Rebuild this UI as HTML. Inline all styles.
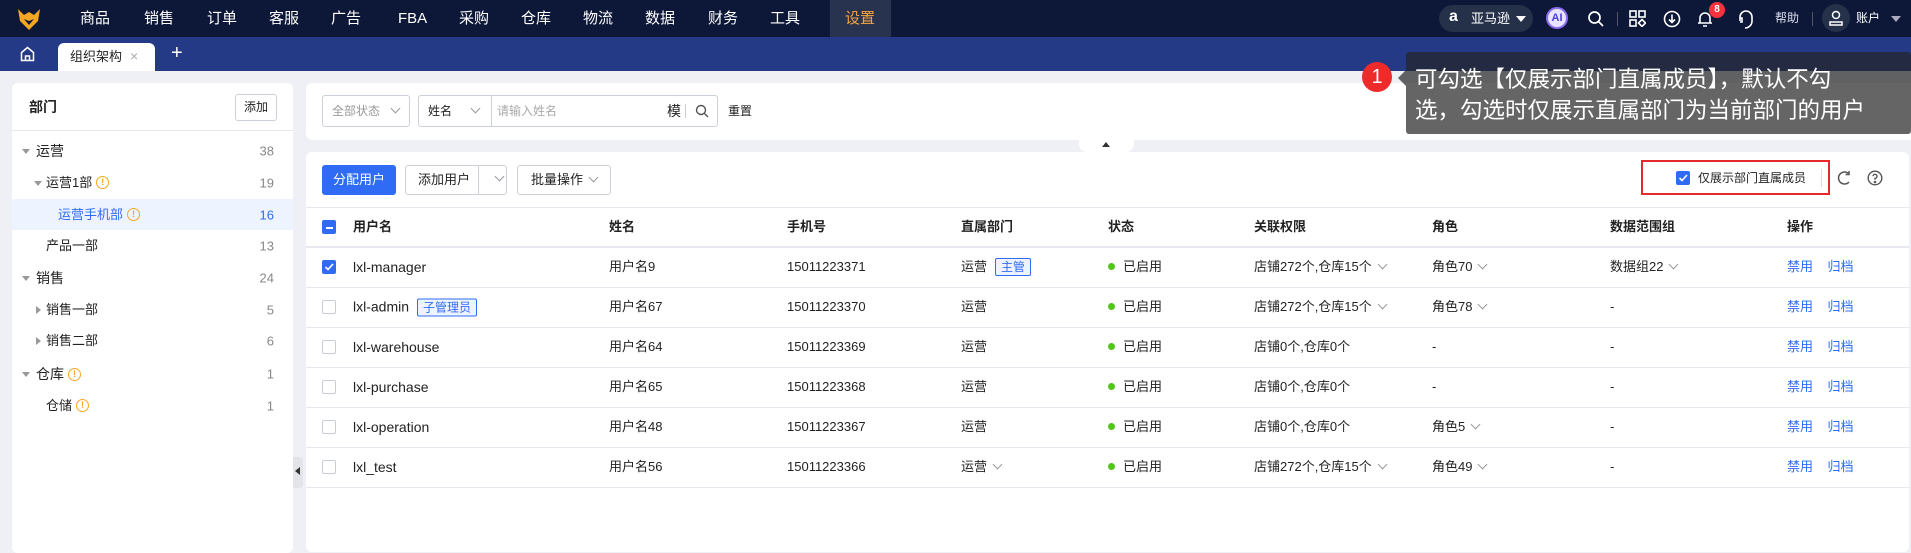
<!DOCTYPE html>
<html><head><meta charset="utf-8">
<style>
*{margin:0;padding:0;box-sizing:border-box}
body{width:1911px;height:546px;overflow:hidden;background:#eef0f6;font-family:"Liberation Sans","Noto Sans CJK SC",sans-serif;font-size:13px;color:#222;position:relative}
.a{position:absolute}
.nav{left:0;top:0;width:1911px;height:37px;background:#0d1838}
.nav .m{position:absolute;top:0;height:37px;line-height:37px;color:#fff;font-size:15px}
.tabs{left:0;top:37px;width:1911px;height:34px;background:#243a86}
.panel{background:#fff;border-radius:6px}
.t{position:absolute;white-space:nowrap;transform:translateY(-50%);line-height:18px}
.cnt{position:absolute;right:19px;color:#888;transform:translateY(-50%)}
.warn{display:inline-block;width:13px;height:13px;border:1.3px solid #f5a623;border-radius:50%;color:#f5a623;font-size:9px;line-height:11px;text-align:center;font-weight:bold;vertical-align:middle;margin-left:4px;margin-top:-2px}
.btn{position:absolute;border:1px solid #ccd0d8;border-radius:3px;background:#fff;height:30px;line-height:28px;font-size:13px;text-align:center}
.cb{position:absolute;width:14px;height:14px;border:1px solid #c8ccd4;border-radius:2px;background:#fff}
.cbon{background:#2f6bf5;border-color:#2f6bf5}
.hl{position:absolute;left:0;width:100%;height:1px;background:#e6e8ee}
.dot{display:inline-block;width:7px;height:7px;border-radius:50%;background:#52c41a;margin-right:8px;vertical-align:1px}
.ln{color:#2f6bf5}
.chev{display:inline-block;width:7px;height:7px;border-right:1px solid #999;border-bottom:1px solid #999;transform:rotate(45deg);margin-left:7px;vertical-align:3px}
.tag{display:inline-block;border:1px solid #2f6bf5;color:#2f6bf5;background:#eef4ff;font-size:12px;line-height:16px;padding:0 5px;border-radius:2px;margin-left:8px}
.dn{position:absolute;border:4px solid transparent;border-top:5px solid #999;border-bottom:0}
.rt{position:absolute;border:4px solid transparent;border-left:5px solid #999;border-right:0}
</style></head><body>

<div class="a nav">
 <svg class="a" style="left:17px;top:7px" width="24" height="24" viewBox="0 0 24 24"><path d="M1 2 L7 8 L12 5 L17 8 L23 2 L21 14 L12 23 L3 14Z" fill="#f5a623"/><path d="M7 12 L12 18 L17 12 L12 14Z" fill="#0d1838"/></svg>
 <div class="m" style="left:80px">商品</div><div class="m" style="left:144px">销售</div><div class="m" style="left:207px">订单</div><div class="m" style="left:269px">客服</div><div class="m" style="left:331px">广告</div><div class="m" style="left:398px">FBA</div><div class="m" style="left:459px">采购</div><div class="m" style="left:521px">仓库</div><div class="m" style="left:583px">物流</div><div class="m" style="left:645px">数据</div><div class="m" style="left:708px">财务</div><div class="m" style="left:770px">工具</div>
 <div class="a" style="left:830px;top:0;width:61px;height:37px;background:#283350"></div>
 <div class="m" style="left:845px;color:#f7a33b">设置</div>
 <div class="a" style="left:1439px;top:5px;width:94px;height:27px;border-radius:14px;background:#253049"></div>
 <div class="a" style="left:1449px;top:5px;color:#fff;font-weight:bold;font-size:16px;line-height:24px">a</div>
 <div class="a" style="left:1471px;top:5px;color:#fff;font-size:13px;line-height:27px">亚马逊</div>
 <div class="a" style="left:1516px;top:16px;border:5px solid transparent;border-top:6px solid #fff"></div>
 <div class="a" style="left:1546px;top:7px;width:22px;height:22px;border-radius:50%;background:#e8e4ff;border:2px solid #8a6cf0;color:#4a3dd8;font-size:11px;font-weight:bold;text-align:center;line-height:18px">AI</div>
 <svg class="a" style="left:1587px;top:10px" width="18" height="18" viewBox="0 0 18 18" fill="none" stroke="#fff" stroke-width="1.7"><circle cx="7.5" cy="7.5" r="5.5"/><path d="M11.5 11.5 L16 16"/></svg>
 <div class="a" style="left:1617px;top:12px;width:1px;height:14px;background:#556"></div>
 <svg class="a" style="left:1629px;top:10px" width="17" height="17" viewBox="0 0 17 17" fill="none" stroke="#fff" stroke-width="1.6"><rect x="1" y="1" width="6" height="6"/><rect x="10" y="1" width="6" height="6"/><rect x="1" y="10" width="6" height="6"/><path d="M13 9.5 L16.5 13 L13 16.5 L9.5 13Z"/></svg>
 <svg class="a" style="left:1663px;top:10px" width="18" height="18" viewBox="0 0 18 18" fill="none" stroke="#fff" stroke-width="1.6"><circle cx="9" cy="9" r="7.5"/><path d="M9 4.5 V12 M6 9.5 L9 12.5 L12 9.5"/></svg>
 <svg class="a" style="left:1696px;top:10px" width="18" height="18" viewBox="0 0 18 18" fill="none" stroke="#fff" stroke-width="1.6"><path d="M4 13 V8 A5 5 0 0 1 14 8 V13 Z M2 13 H16 M7 16 H11"/></svg>
 <div class="a" style="left:1709px;top:2px;width:16px;height:16px;border-radius:50%;background:#f5333f;color:#fff;font-size:10px;font-weight:bold;text-align:center;line-height:16px">8</div>
 <svg class="a" style="left:1737px;top:9px" width="18" height="20" viewBox="0 0 18 20" fill="none" stroke="#fff" stroke-width="1.6"><path d="M3 12 V8 A6 6 0 0 1 15 8 V12 M8 19 A7 7 0 0 0 15 12 M3 9 H5 V13 H3"/></svg>
 <div class="a" style="left:1775px;top:0;color:#dde;font-size:12px;line-height:37px">帮助</div>
 <div class="a" style="left:1812px;top:12px;width:1px;height:14px;background:#556"></div>
 <div class="a" style="left:1822px;top:4px;width:28px;height:28px;border-radius:50%;background:#253049"></div>
 <svg class="a" style="left:1828px;top:10px" width="16" height="16" viewBox="0 0 16 16" fill="none" stroke="#fff" stroke-width="1.5"><circle cx="8" cy="5" r="3.5"/><path d="M2 15 V12 H14 V15Z"/></svg>
 <div class="a" style="left:1856px;top:0;color:#fff;font-size:12px;line-height:37px">账户</div>
 <div class="a" style="left:1891px;top:16px;border:5px solid transparent;border-top:6px solid #aab"></div>
</div>

<div class="a tabs">
 <svg class="a" style="left:20px;top:9px" width="15" height="16" viewBox="0 0 15 16" fill="none" stroke="#fff" stroke-width="1.5"><path d="M1.5 6.5 L7.5 1.5 L13.5 6.5 V14.5 H1.5Z M5.5 14.5 V10 H9.5 V14.5"/></svg>
 <div class="a" style="left:58px;top:6px;width:97px;height:28px;background:#fff;border-radius:6px 6px 0 0"></div>
 <div class="a" style="left:70px;top:6px;font-size:13px;color:#222;line-height:28px">组织架构</div>
 <div class="a" style="left:130px;top:6px;font-size:14px;color:#aaa;line-height:26px">×</div>
 <div class="a" style="left:171px;top:5px;font-size:20px;color:#fff">+</div>
</div>

<!-- left panel -->
<div class="a panel" style="left:12px;top:83px;width:281px;height:470px">
 <div class="t" style="left:17px;top:24px;font-size:14px;font-weight:bold">部门</div>
 <div class="btn" style="left:223px;top:11px;width:42px;height:27px;line-height:25px;font-size:12px">添加</div>
 <div class="hl" style="top:47px"></div>
 <div class="a" style="left:0;top:116px;width:281px;height:31px;background:#eef4ff"></div>
 <div class="dn" style="left:10px;top:66px"></div><div class="t" style="left:24px;top:68px;font-size:14px">运营</div><div class="cnt" style="top:68px">38</div>
 <div class="dn" style="left:22px;top:98px"></div><div class="t" style="left:34px;top:100px">运营1部<span class="warn">!</span></div><div class="cnt" style="top:100px">19</div>
 <div class="t" style="left:46px;top:132px;color:#2f6bf5">运营手机部<span class="warn">!</span></div><div class="cnt" style="top:132px;color:#2f6bf5">16</div>
 <div class="t" style="left:34px;top:163px">产品一部</div><div class="cnt" style="top:163px">13</div>
 <div class="dn" style="left:10px;top:193px"></div><div class="t" style="left:24px;top:195px;font-size:14px">销售</div><div class="cnt" style="top:195px">24</div>
 <div class="rt" style="left:24px;top:223px"></div><div class="t" style="left:34px;top:227px">销售一部</div><div class="cnt" style="top:227px">5</div>
 <div class="rt" style="left:24px;top:254px"></div><div class="t" style="left:34px;top:258px">销售二部</div><div class="cnt" style="top:258px">6</div>
 <div class="dn" style="left:10px;top:289px"></div><div class="t" style="left:24px;top:291px;font-size:14px">仓库<span class="warn">!</span></div><div class="cnt" style="top:291px">1</div>
 <div class="t" style="left:34px;top:323px">仓储<span class="warn">!</span></div><div class="cnt" style="top:323px">1</div>
</div>
<div class="a" style="left:293px;top:457px;width:10px;height:31px;background:#e2e4ea;border-radius:0 4px 4px 0"></div>
<div class="a" style="left:295px;top:467px;border:4px solid transparent;border-right:5px solid #333;border-left:0"></div>

<!-- search panel -->
<div class="a panel" style="left:306px;top:83px;width:1605px;height:57px;border-radius:6px 0 0 6px">
 <div class="btn" style="left:16px;top:12px;width:88px;height:32px;line-height:30px;text-align:left;padding-left:9px;color:#999;font-size:12px">全部状态<span class="chev" style="margin-left:12px"></span></div>
 <div class="btn" style="left:112px;top:12px;width:300px;height:32px;line-height:30px;text-align:left;padding-left:9px;font-size:12px">姓名<span class="chev" style="margin-left:20px"></span><span style="color:#aaa;margin-left:18px">请输入姓名</span>
  <span class="a" style="left:72px;top:0;width:1px;height:30px;background:#ccd0d8"></span>
  <span class="a" style="left:248px;top:0;font-size:14px">模</span><span class="a" style="left:266px;top:8px;width:1px;height:14px;background:#ccc"></span>
  <svg class="a" style="left:276px;top:8px" width="14" height="14" viewBox="0 0 14 14" fill="none" stroke="#555" stroke-width="1.4"><circle cx="6" cy="6" r="4.5"/><path d="M9.5 9.5 L13 13"/></svg></div>
 <div class="t" style="left:422px;top:28px;font-size:12px">重置</div>
</div>
<div class="a" style="left:1079px;top:140px;width:55px;height:12px;background:#fff;border-radius:0 0 8px 8px"></div>
<div class="a" style="left:1102px;top:142px;border:4px solid transparent;border-bottom:5px solid #333;border-top:0"></div>

<!-- main panel -->
<div class="a panel" style="left:306px;top:152px;width:1603px;height:400px">
 <div class="btn" style="left:16px;top:13px;width:74px;background:#2f6bf5;border-color:#2f6bf5;color:#fff">分配用户</div>
 <div class="btn" style="left:99px;top:13px;width:102px;text-align:left;padding-left:12px">添加用户<span class="a" style="left:72px;top:0;width:1px;height:28px;background:#ccd0d8"></span><span class="chev" style="position:absolute;left:83px;top:7px"></span></div>
 <div class="btn" style="left:211px;top:13px;width:94px">批量操作<span class="chev"></span></div>
 <div class="a" style="left:1335px;top:8px;width:189px;height:35px;border:2px solid #e42a2a"></div>
 <div class="cb cbon" style="left:1370px;top:19px"><svg width="12" height="12" viewBox="0 0 12 12"><path d="M2.5 6 L5 8.5 L10 3" stroke="#fff" stroke-width="1.6" fill="none"/></svg></div>
 <div class="t" style="left:1392px;top:26px;font-size:12px">仅展示部门直属成员</div>
 <div class="a" style="left:1515px;top:17px;width:1px;height:18px;background:#ddd"></div>
 <svg class="a" style="left:1530px;top:18px" width="16" height="16" viewBox="0 0 16 16" fill="none" stroke="#555" stroke-width="1.5"><path d="M13 4 A6 6 0 1 0 13 12"/><path d="M13 1 V4.5 H9.5"/></svg>
 <svg class="a" style="left:1561px;top:18px" width="16" height="16" viewBox="0 0 16 16" fill="none" stroke="#555" stroke-width="1.4"><circle cx="8" cy="8" r="6.8"/><path d="M6 6.2 A2 2 0 1 1 8 8.3 V9.8"/><circle cx="8" cy="12" r=".6" fill="#555"/></svg>
 <div class="hl" style="top:55px"></div>
 <div class="hl" style="top:94px;height:2px"></div>
 <div class="cb cbon" style="left:16px;top:68px"><div style="margin:5.5px 2.5px;height:2px;background:#fff"></div></div>
 <div style="font-weight:bold">
  <div class="t" style="left:47px;top:75px">用户名</div><div class="t" style="left:303px;top:75px">姓名</div><div class="t" style="left:481px;top:75px">手机号</div><div class="t" style="left:655px;top:75px">直属部门</div><div class="t" style="left:802px;top:75px">状态</div><div class="t" style="left:948px;top:75px">关联权限</div><div class="t" style="left:1126px;top:75px">角色</div><div class="t" style="left:1304px;top:75px">数据范围组</div><div class="t" style="left:1481px;top:75px">操作</div>
 </div>
 <div class="cb cbon" style="left:16px;top:108px"><svg width="12" height="12" viewBox="0 0 12 12"><path d="M2.5 6 L5 8.5 L10 3" stroke="#fff" stroke-width="1.6" fill="none"/></svg></div>
 <div class="t" style="left:47px;top:115px;font-size:14px">lxl-manager</div><div class="t" style="left:303px;top:115px">用户名9</div><div class="t" style="left:481px;top:115px">15011223371</div><div class="t" style="left:655px;top:115px">运营<span class="tag">主管</span></div><div class="t" style="left:802px;top:115px"><span class="dot"></span>已启用</div><div class="t" style="left:948px;top:115px">店铺272个,仓库15个<span class="chev"></span></div><div class="t" style="left:1126px;top:115px">角色70<span class="chev"></span></div><div class="t" style="left:1304px;top:115px">数据组22<span class="chev"></span></div><div class="t ln" style="left:1481px;top:115px">禁用&nbsp;&nbsp;&nbsp;&nbsp;归档</div>
 <div class="hl" style="top:135px"></div>
 <div class="cb" style="left:16px;top:148px"></div>
 <div class="t" style="left:47px;top:155px;font-size:14px">lxl-admin<span class="tag">子管理员</span></div><div class="t" style="left:303px;top:155px">用户名67</div><div class="t" style="left:481px;top:155px">15011223370</div><div class="t" style="left:655px;top:155px">运营</div><div class="t" style="left:802px;top:155px"><span class="dot"></span>已启用</div><div class="t" style="left:948px;top:155px">店铺272个,仓库15个<span class="chev"></span></div><div class="t" style="left:1126px;top:155px">角色78<span class="chev"></span></div><div class="t" style="left:1304px;top:155px">-</div><div class="t ln" style="left:1481px;top:155px">禁用&nbsp;&nbsp;&nbsp;&nbsp;归档</div>
 <div class="hl" style="top:175px"></div>
 <div class="cb" style="left:16px;top:188px"></div>
 <div class="t" style="left:47px;top:195px;font-size:14px">lxl-warehouse</div><div class="t" style="left:303px;top:195px">用户名64</div><div class="t" style="left:481px;top:195px">15011223369</div><div class="t" style="left:655px;top:195px">运营</div><div class="t" style="left:802px;top:195px"><span class="dot"></span>已启用</div><div class="t" style="left:948px;top:195px">店铺0个,仓库0个</div><div class="t" style="left:1126px;top:195px">-</div><div class="t" style="left:1304px;top:195px">-</div><div class="t ln" style="left:1481px;top:195px">禁用&nbsp;&nbsp;&nbsp;&nbsp;归档</div>
 <div class="hl" style="top:215px"></div>
 <div class="cb" style="left:16px;top:228px"></div>
 <div class="t" style="left:47px;top:235px;font-size:14px">lxl-purchase</div><div class="t" style="left:303px;top:235px">用户名65</div><div class="t" style="left:481px;top:235px">15011223368</div><div class="t" style="left:655px;top:235px">运营</div><div class="t" style="left:802px;top:235px"><span class="dot"></span>已启用</div><div class="t" style="left:948px;top:235px">店铺0个,仓库0个</div><div class="t" style="left:1126px;top:235px">-</div><div class="t" style="left:1304px;top:235px">-</div><div class="t ln" style="left:1481px;top:235px">禁用&nbsp;&nbsp;&nbsp;&nbsp;归档</div>
 <div class="hl" style="top:255px"></div>
 <div class="cb" style="left:16px;top:268px"></div>
 <div class="t" style="left:47px;top:275px;font-size:14px">lxl-operation</div><div class="t" style="left:303px;top:275px">用户名48</div><div class="t" style="left:481px;top:275px">15011223367</div><div class="t" style="left:655px;top:275px">运营</div><div class="t" style="left:802px;top:275px"><span class="dot"></span>已启用</div><div class="t" style="left:948px;top:275px">店铺0个,仓库0个</div><div class="t" style="left:1126px;top:275px">角色5<span class="chev"></span></div><div class="t" style="left:1304px;top:275px">-</div><div class="t ln" style="left:1481px;top:275px">禁用&nbsp;&nbsp;&nbsp;&nbsp;归档</div>
 <div class="hl" style="top:295px"></div>
 <div class="cb" style="left:16px;top:308px"></div>
 <div class="t" style="left:47px;top:315px;font-size:14px">lxl_test</div><div class="t" style="left:303px;top:315px">用户名56</div><div class="t" style="left:481px;top:315px">15011223366</div><div class="t" style="left:655px;top:315px">运营<span class="chev"></span></div><div class="t" style="left:802px;top:315px"><span class="dot"></span>已启用</div><div class="t" style="left:948px;top:315px">店铺272个,仓库15个<span class="chev"></span></div><div class="t" style="left:1126px;top:315px">角色49<span class="chev"></span></div><div class="t" style="left:1304px;top:315px">-</div><div class="t ln" style="left:1481px;top:315px">禁用&nbsp;&nbsp;&nbsp;&nbsp;归档</div>
 <div class="hl" style="top:335px"></div>
</div>

<!-- tooltip -->
<div class="a" style="left:1406px;top:52px;width:505px;height:82px;background:rgba(35,35,35,0.7);border-radius:3px"></div>
<div class="a" style="left:1398px;top:70px;border:8px solid transparent;border-right:8px solid rgba(35,35,35,0.7);border-left:0"></div>
<div class="a" style="left:1362px;top:62px;width:30px;height:30px;border-radius:50%;background:#ee2a2a;color:#fff;font-size:20px;text-align:center;line-height:30px">1</div>
<div class="a" style="left:1415px;top:64px;color:#fff;font-size:22.5px;line-height:31px;width:500px;white-space:nowrap">可勾选【仅展示部门直属成员】，默认不勾<br>选，勾选时仅展示直属部门为当前部门的用户</div>
</body></html>
